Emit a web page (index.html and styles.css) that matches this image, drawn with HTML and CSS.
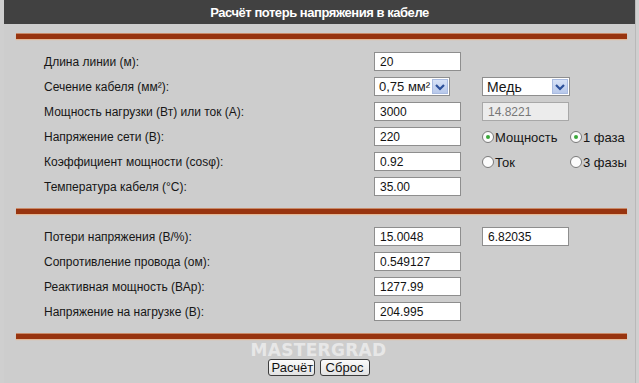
FILE: index.html
```html
<!DOCTYPE html>
<html lang="ru">
<head>
<meta charset="utf-8">
<title>Расчёт потерь напряжения в кабеле</title>
<link rel="stylesheet" href="styles.css">
</head>
<body>
<div class="page">
  <div class="header">Расчёт потерь напряжения в кабеле</div>
  <div class="bar bar-first"></div>
  <div class="grid">
    <div class="label">Длина линии (м):</div>
    <input class="field" type="text" value="20">
    <div></div><div></div>

    <div class="label">Сечение кабеля (мм²):</div>
    <div class="sel sel-small"><span class="sel-text">0,75 мм²</span><span class="arrow"><svg width="12" height="10" viewBox="0 0 12 10"><path d="M2 3 L6 7 L10 3" fill="none" stroke="#2b4f9a" stroke-width="2.2"/></svg></span></div>
    <div class="sel sel-wide"><span class="sel-text sel-big">Медь</span><span class="arrow"><svg width="12" height="10" viewBox="0 0 12 10"><path d="M2 3 L6 7 L10 3" fill="none" stroke="#2b4f9a" stroke-width="2.2"/></svg></span></div>
    <div></div>

    <div class="label">Мощность нагрузки (Вт) или ток (А):</div>
    <input class="field" type="text" value="3000">
    <input class="field disabled" type="text" value="14.8221" disabled>
    <div></div>

    <div class="label">Напряжение сети (В):</div>
    <input class="field" type="text" value="220">
    <label class="radio"><input type="radio" name="m" checked>Мощность</label>
    <label class="radio"><input type="radio" name="f" checked>1 фаза</label>

    <div class="label">Коэффициент мощности (cosφ):</div>
    <input class="field" type="text" value="0.92">
    <label class="radio"><input type="radio" name="m">Ток</label>
    <label class="radio"><input type="radio" name="f">3 фазы</label>

    <div class="label">Температура кабеля (°C):</div>
    <input class="field" type="text" value="35.00">
    <div></div><div></div>
  </div>
  <div class="bar"></div>
  <div class="grid">
    <div class="label">Потери напряжения (В/%):</div>
    <input class="field" type="text" value="15.0048">
    <input class="field" type="text" value="6.82035">
    <div></div>

    <div class="label">Сопротивление провода (ом):</div>
    <input class="field" type="text" value="0.549127">
    <div></div><div></div>

    <div class="label">Реактивная мощность (ВАр):</div>
    <input class="field" type="text" value="1277.99">
    <div></div><div></div>

    <div class="label">Напряжение на нагрузке (В):</div>
    <input class="field" type="text" value="204.995">
    <div></div><div></div>
  </div>
  <div class="bar"></div>
  <div class="footer">
    <div class="watermark">MASTERGRAD</div>
    <div class="buttons">
      <button class="btn btn-calc" type="button">Расчёт</button>
      <button class="btn btn-reset" type="button">Сброс</button>
    </div>
  </div>
</div>
</body>
</html>
```

FILE: styles.css
```css
html, body {
  margin: 0;
  padding: 0;
}
body {
  background: #cfcfcf;
  font-family: "Liberation Sans", Arial, sans-serif;
  color: #161616;
  width: 639px;
  height: 383px;
  overflow: hidden;
}
.page {
  margin: 0 3px 0 4px;
  border-right: 1px solid #b9b9b9;
  height: 383px;
  background: #cdcdcd;
}
.header {
  height: 24px;
  line-height: 25px;
  background: #414141;
  color: #ffffff;
  text-align: center;
  font-family: "Liberation Sans Narrow", "Arial Narrow", "Liberation Sans", sans-serif;
  font-weight: bold;
  font-size: 13px;
  letter-spacing: -0.45px;
}
.bar {
  margin: 13px 8px 0 12px;
  height: 5px;
  background: #98340f;
  box-shadow: 0 1px 1px #e4b896, 0 -1px 0 #c98a68;
}
.bar-first {
  margin-top: 10px;
}
.grid {
  display: grid;
  grid-template-columns: 330px 108px 88px auto;
  grid-auto-rows: 19px;
  row-gap: 6px;
  padding: 13px 0 0 40px;
  align-items: center;
}
.label {
  font-size: 12px;
  line-height: 19px;
  padding-top: 1px;
  white-space: nowrap;
}
.field {
  box-sizing: border-box;
  width: 87px;
  height: 19px;
  margin: 0;
  border: 1px solid #8e8e8e;
  background: #ffffff;
  font-family: "Liberation Sans", Arial, sans-serif;
  font-size: 12px;
  color: #111;
  padding: 1px 0 0 5px;
  outline: none;
}
.field.disabled {
  background: #ececec;
  color: #777;
  border-color: #a8a8a8;
  width: 87px;
}
.sel {
  box-sizing: border-box;
  height: 19px;
  background: #ffffff;
  border: 1px solid #8e8e8e;
  display: flex;
  align-items: center;
  justify-content: space-between;
  padding: 0 1px 0 4px;
}
.sel-small { width: 76px; }
.sel-wide { width: 88px; }
.sel-text {
  font-size: 13px;
  white-space: nowrap;
}
.sel-big {
  font-size: 14px;
}
.arrow {
  width: 16px;
  height: 15px;
  box-sizing: border-box;
  background: linear-gradient(#d7e2f7, #b7c8ea);
  border: 1px solid #a9bbe0;
  display: flex;
  align-items: center;
  justify-content: center;
}
.radio {
  display: flex;
  align-items: center;
  font-size: 13px;
  white-space: nowrap;
  padding-top: 1px;
}
.radio input {
  appearance: none;
  -webkit-appearance: none;
  width: 12px;
  height: 12px;
  margin: 0 1px 0 0;
  border-radius: 50%;
  border: 1px solid #7a7a7a;
  background: #fbfbfb;
  position: relative;
}
.radio input:checked::after {
  content: "";
  position: absolute;
  left: 3px;
  top: 3px;
  width: 4px;
  height: 4px;
  border-radius: 50%;
  background: #3aa83a;
}
.footer {
  display: flex;
  flex-direction: column;
  align-items: center;
  padding-right: 2px;
}
.watermark {
  margin-top: 2px;
  height: 18px;
  line-height: 18px;
  font-family: "DejaVu Sans", "Liberation Sans", sans-serif;
  font-weight: bold;
  font-size: 17px;
  letter-spacing: 0.3px;
  color: rgba(255, 255, 255, 0.55);
}
.buttons {
  display: flex;
  gap: 5px;
  margin-top: 0;
}
.btn {
  height: 17px;
  padding: 0 3px;
  font-family: "Liberation Sans", Arial, sans-serif;
  font-size: 13px;
  line-height: 15px;
  color: #111;
  background: linear-gradient(#fbfbfb, #e3e3e3);
  border: 1px solid #3c3c3c;
  border-radius: 3px;
}
.btn-calc { width: 47px; }
.btn-reset { width: 50px; }
```
